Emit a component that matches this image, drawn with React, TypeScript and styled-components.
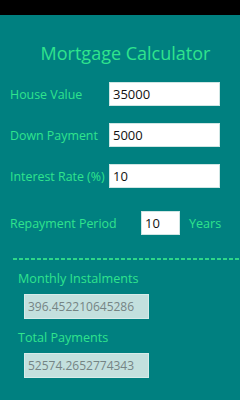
import React from "react";
import styled, { createGlobalStyle } from "styled-components";

const Global = createGlobalStyle`
  html, body { margin: 0; padding: 0; background: #008080; }
  body { font-family: "Open Sans", "DejaVu Sans", sans-serif; }
  * { box-sizing: border-box; }
`;

const Screen = styled.div`
  width: 240px;
  height: 400px;
  background: #008080;
  display: flex;
  flex-direction: column;
  overflow: hidden;
`;

const StatusBar = styled.div`
  height: 15px;
  background: #000;
  flex: none;
`;

const Title = styled.h1`
  margin: 26px 0 0;
  font-size: 18px;
  font-weight: 400;
  line-height: 24px;
  text-align: center;
  color: #30e48d;
  padding-left: 11px;
`;

const Form = styled.div`
  display: flex;
  flex-direction: column;
  gap: 17px;
  margin-top: 17px;
  padding-left: 10px;
`;

const Row = styled.div<{ $top?: number }>`
  display: flex;
  align-items: center;
  margin-top: ${(p) => p.$top ?? 0}px;
`;

const Label = styled.span<{ $w?: number }>`
  width: ${(p) => p.$w ?? 99}px;
  flex: none;
  font-size: 12.4px;
  color: #30e48d;
  white-space: nowrap;
`;

const Input = styled.input<{ $w?: number }>`
  width: ${(p) => p.$w ?? 111}px;
  height: 24px;
  border: 1px solid #cfe6e4;
  background: #fff;
  font-family: inherit;
  font-size: 13px;
  color: #111;
  padding: 0 3px;
  outline: none;
  margin: 0;
`;

const Unit = styled.span`
  margin-left: 9px;
  font-size: 12.6px;
  color: #30e48d;
`;

const Divider = styled.div`
  margin: 23px 0 0 13px;
  height: 2px;
  background: repeating-linear-gradient(
    to right,
    #2fd688 0 4px,
    transparent 4px 6px
  );
`;

const Results = styled.div`
  display: flex;
  flex-direction: column;
  padding-left: 18px;
  margin-top: 10px;
`;

const ResultLabel = styled.div`
  font-size: 12.6px;
  line-height: 18px;
  color: #30e48d;
`;

const ResultBox = styled.div`
  margin: 6px 0 10px 6px;
  width: 125px;
  height: 25px;
  background: #c3e0de;
  border: 1px solid #d6ecea;
  color: #758484;
  font-size: 12px;
  line-height: 23px;
  padding-left: 3px;
`;

export default function App() {
  return (
    <Screen>
      <Global />
      <StatusBar />
      <Title>Mortgage Calculator</Title>
      <Form>
        <Row>
          <Label>House Value</Label>
          <Input defaultValue="35000" />
        </Row>
        <Row>
          <Label>Down Payment</Label>
          <Input defaultValue="5000" />
        </Row>
        <Row>
          <Label>Interest Rate (%)</Label>
          <Input defaultValue="10" />
        </Row>
        <Row $top={6}>
          <Label $w={131}>Repayment Period</Label>
          <Input $w={39} defaultValue="10" />
          <Unit>Years</Unit>
        </Row>
      </Form>
      <Divider />
      <Results>
        <ResultLabel>Monthly Instalments</ResultLabel>
        <ResultBox>396.452210645286</ResultBox>
        <ResultLabel>Total Payments</ResultLabel>
        <ResultBox>52574.2652774343</ResultBox>
      </Results>
    </Screen>
  );
}
